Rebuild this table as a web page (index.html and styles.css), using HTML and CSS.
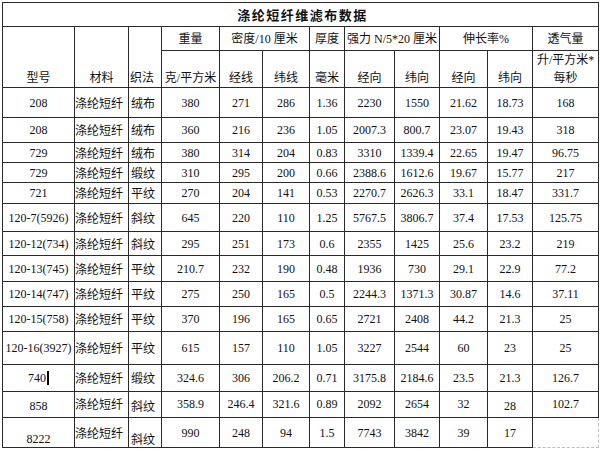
FILE: index.html
```html
<!DOCTYPE html>
<html lang="zh-CN">
<head>
<meta charset="utf-8">
<title>涤纶短纤维滤布数据</title>
<link rel="stylesheet" href="styles.css">
</head>
<body>
<table class="sheet">
  <colgroup>
    <col class="c72"><col class="c54"><col class="c33"><col class="c58"><col class="c43"><col class="c47">
    <col class="c35"><col class="c50"><col class="c45"><col class="c48"><col class="c45"><col class="c66">
  </colgroup>
  <tr class="h24"><td colspan="12" class="title">涤纶短纤维滤布数据</td></tr>
  <tr class="h24">
    <td rowspan="2" class="hb">型号</td>
    <td rowspan="2" class="hb">材料</td>
    <td rowspan="2" class="hb left">织法</td>
    <td class="hc">重量</td>
    <td colspan="2" class="hc">密度/10 厘米</td>
    <td class="hc">厚度</td>
    <td colspan="2" class="hc clip">强力 N/5*20 厘米</td>
    <td colspan="2" class="hc">伸长率%</td>
    <td class="hc">透气量</td>
  </tr>
  <tr class="h37">
    <td class="hb">克/平方米</td>
    <td class="hb">经线</td>
    <td class="hb">纬线</td>
    <td class="hb">毫米</td>
    <td class="hb">经向</td>
    <td class="hb">纬向</td>
    <td class="hb">经向</td>
    <td class="hb">纬向</td>
    <td class="hb two">升/平方米*<br>每秒</td>
  </tr>
  <tr class="h30"><td>208</td><td class="mat">涤纶短纤</td><td class="weave">绒布</td><td>380</td><td>271</td><td>286</td><td>1.36</td><td>2230</td><td>1550</td><td>21.62</td><td>18.73</td><td>168</td></tr>
  <tr class="h25"><td>208</td><td class="mat">涤纶短纤</td><td class="weave">绒布</td><td>360</td><td>216</td><td>236</td><td>1.05</td><td>2007.3</td><td>800.7</td><td>23.07</td><td>19.43</td><td>318</td></tr>
  <tr class="h20"><td>729</td><td class="mat">涤纶短纤</td><td class="weave">绒布</td><td>380</td><td>314</td><td>204</td><td>0.83</td><td>3310</td><td>1339.4</td><td>22.65</td><td>19.47</td><td>96.75</td></tr>
  <tr class="h20"><td>729</td><td class="mat">涤纶短纤</td><td class="weave">缎纹</td><td>310</td><td>295</td><td>200</td><td>0.66</td><td>2388.6</td><td>1612.6</td><td>19.67</td><td>15.77</td><td>217</td></tr>
  <tr class="h21"><td>721</td><td class="mat">涤纶短纤</td><td class="weave">平纹</td><td>270</td><td>204</td><td>141</td><td>0.53</td><td>2270.7</td><td>2626.3</td><td>33.1</td><td>18.47</td><td>331.7</td></tr>
  <tr class="h28"><td>120-7(5926)</td><td class="mat">涤纶短纤</td><td class="weave">斜纹</td><td>645</td><td>220</td><td>110</td><td>1.25</td><td>5767.5</td><td>3806.7</td><td>37.4</td><td>17.53</td><td>125.75</td></tr>
  <tr class="h24"><td>120-12(734)</td><td class="mat">涤纶短纤</td><td class="weave">斜纹</td><td>295</td><td>251</td><td>173</td><td>0.6</td><td>2355</td><td>1425</td><td>25.6</td><td>23.2</td><td>219</td></tr>
  <tr class="h26"><td>120-13(745)</td><td class="mat">涤纶短纤</td><td class="weave">平纹</td><td>210.7</td><td>232</td><td>190</td><td>0.48</td><td>1936</td><td>730</td><td>29.1</td><td>22.9</td><td>77.2</td></tr>
  <tr class="h25"><td>120-14(747)</td><td class="mat">涤纶短纤</td><td class="weave">平纹</td><td>275</td><td>250</td><td>165</td><td>0.5</td><td>2244.3</td><td>1371.3</td><td>30.87</td><td>14.6</td><td>37.11</td></tr>
  <tr class="h25"><td>120-15(758)</td><td class="mat">涤纶短纤</td><td class="weave">平纹</td><td>370</td><td>196</td><td>165</td><td>0.65</td><td>2721</td><td>2408</td><td>44.2</td><td>21.3</td><td>25</td></tr>
  <tr class="h33"><td>120-16(3927)</td><td class="mat">涤纶短纤</td><td class="weave">平纹</td><td>615</td><td>157</td><td>110</td><td>1.05</td><td>3227</td><td>2544</td><td>60</td><td>23</td><td>25</td></tr>
  <tr class="h27"><td>740<span class="caret"></span></td><td class="mat">涤纶短纤</td><td class="weave">缎纹</td><td>324.6</td><td>306</td><td>206.2</td><td>0.71</td><td>3175.8</td><td>2184.6</td><td>23.5</td><td>21.3</td><td>126.7</td></tr>
  <tr class="h26"><td class="low">858</td><td class="mat high">涤纶短纤</td><td class="weave low">斜纹</td><td class="high">358.9</td><td class="high">246.4</td><td class="high">321.6</td><td class="high">0.89</td><td class="high">2092</td><td class="high">2654</td><td class="high">32</td><td class="low">28</td><td class="high">102.7</td></tr>
  <tr class="h30"><td class="bottom">8222</td><td class="mat">涤纶短纤</td><td class="weave bottom">斜纹</td><td>990</td><td>248</td><td>94</td><td>1.5</td><td>7743</td><td>3842</td><td>39</td><td>17</td><td class="empty"></td></tr>
</table>
</body>
</html>
```
FILE: styles.css
```css
html, body {
  margin: 0;
  padding: 0;
  background: #fff;
}

.sheet {
  border-collapse: collapse;
  table-layout: fixed;
  width: 596px;
  margin: 2px 0 0 2px;
  font-family: "Liberation Serif", "Noto Sans CJK SC", serif;
  font-size: 12px;
  color: #111;
}

.c72 { width: 72px; }
.c54 { width: 54px; }
.c33 { width: 33px; }
.c58 { width: 58px; }
.c43 { width: 43px; }
.c47 { width: 47px; }
.c35 { width: 35px; }
.c50 { width: 50px; }
.c45 { width: 45px; }
.c48 { width: 48px; }
.c66 { width: 66px; }

.h20 { height: 20px; }
.h21 { height: 21px; }
.h24 { height: 24px; }
.h25 { height: 25px; }
.h26 { height: 26px; }
.h27 { height: 27px; }
.h28 { height: 28px; }
.h30 { height: 30px; }
.h33 { height: 33px; }
.h37 { height: 37px; }

.sheet td {
  border: 1px solid #2a2a2a;
  padding: 0;
  text-align: center;
  vertical-align: middle;
  white-space: nowrap;
  overflow: hidden;
  line-height: 14px;
}

.sheet td.title {
  font-family: "Noto Sans CJK SC", sans-serif;
  font-weight: bold;
  font-size: 13px;
  letter-spacing: 1.5px;
  padding-left: 4px;
}

.sheet td.hb {
  vertical-align: bottom;
  padding-bottom: 2px;
}

.sheet td.hc {
  vertical-align: middle;
}

.sheet td.left {
  text-align: left;
  padding-left: 1px;
}

.sheet td.two {
  line-height: 18px;
  padding-bottom: 0;
}

.sheet td.mat {
  text-align: left;
  font-family: "Noto Sans CJK SC", sans-serif;
  padding-left: 0;
}

.sheet td.weave {
  text-align: left;
  font-family: "Noto Sans CJK SC", sans-serif;
  padding-left: 2px;
}

.sheet td.high {
  vertical-align: top;
  padding-top: 5px;
}

.sheet td.low {
  vertical-align: bottom;
  padding-bottom: 4px;
}

.sheet td.bottom {
  vertical-align: bottom;
  padding-bottom: 1px;
}

.sheet td.empty {
  border-right: 1px dashed #bdbdbd;
  border-bottom: 1px dashed #bdbdbd;
}

.caret {
  display: inline-block;
  width: 2px;
  height: 14px;
  background: #000;
  vertical-align: -3px;
  margin-left: 1px;
}
```
